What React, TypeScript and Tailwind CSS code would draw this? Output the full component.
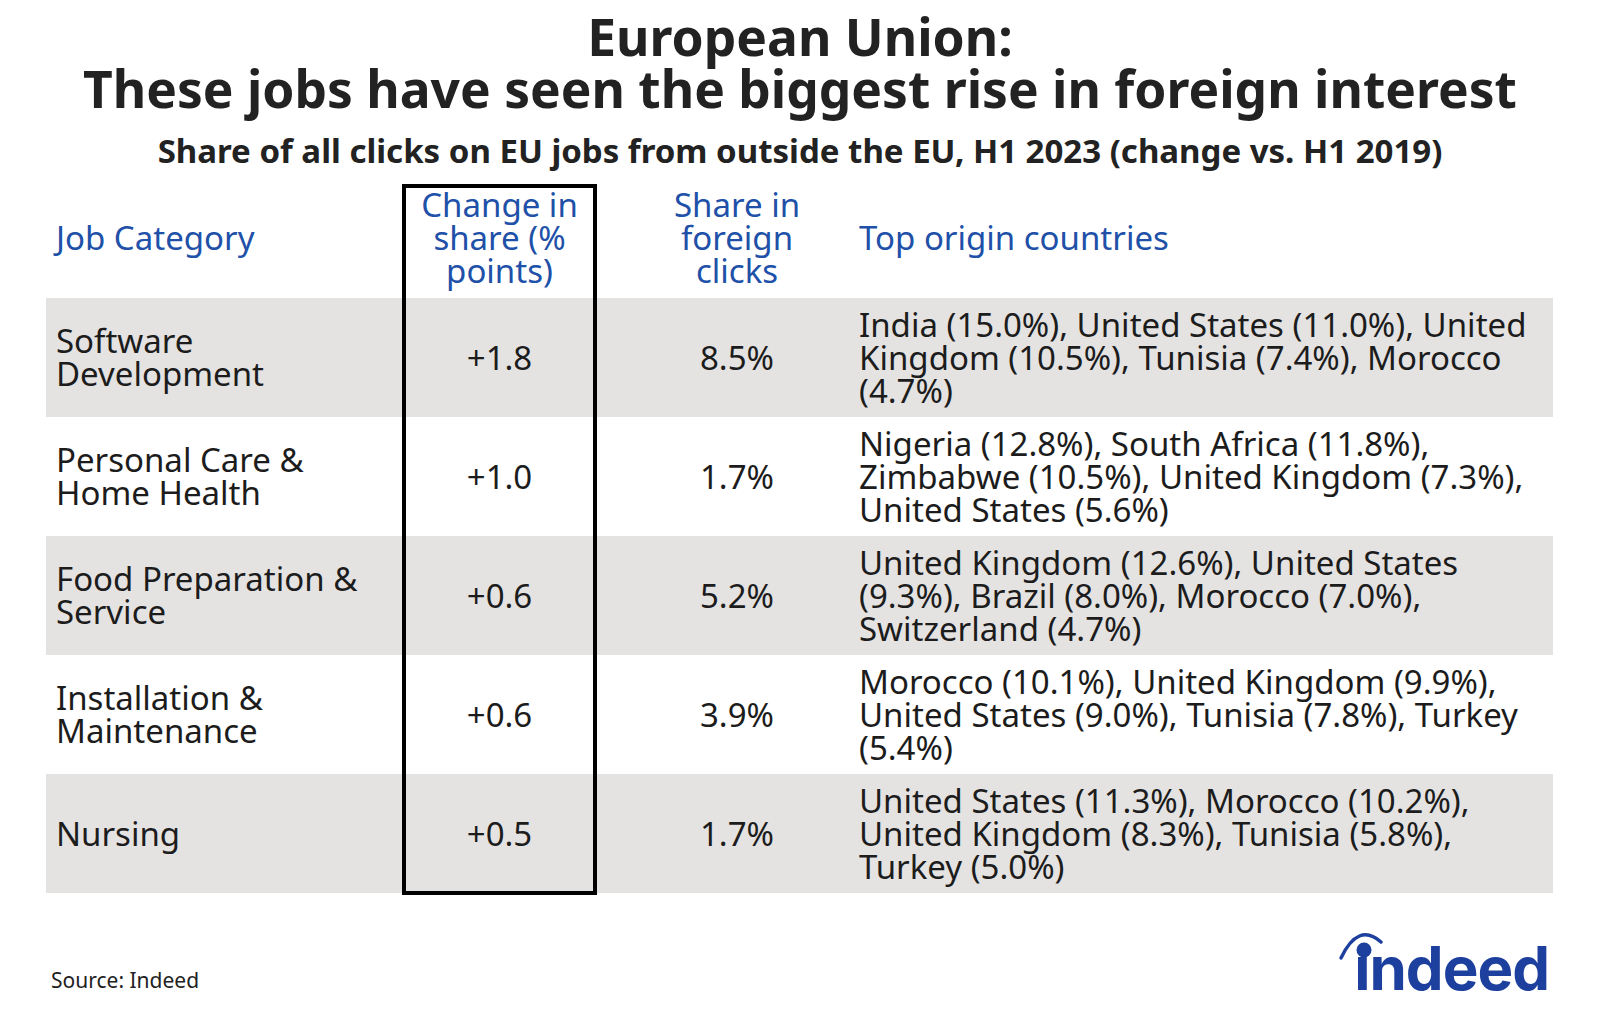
import React from "react";

const rows = [
  {
    job: ["Software", "Development"],
    change: "+1.8",
    share: "8.5%",
    origin: [
      "India (15.0%), United States (11.0%), United",
      "Kingdom (10.5%), Tunisia (7.4%), Morocco",
      "(4.7%)",
    ],
  },
  {
    job: ["Personal Care &", "Home Health"],
    change: "+1.0",
    share: "1.7%",
    origin: [
      "Nigeria (12.8%), South Africa (11.8%),",
      "Zimbabwe (10.5%), United Kingdom (7.3%),",
      "United States (5.6%)",
    ],
  },
  {
    job: ["Food Preparation &", "Service"],
    change: "+0.6",
    share: "5.2%",
    origin: [
      "United Kingdom (12.6%), United States",
      "(9.3%), Brazil (8.0%), Morocco (7.0%),",
      "Switzerland (4.7%)",
    ],
  },
  {
    job: ["Installation &", "Maintenance"],
    change: "+0.6",
    share: "3.9%",
    origin: [
      "Morocco (10.1%), United Kingdom (9.9%),",
      "United States (9.0%), Tunisia (7.8%), Turkey",
      "(5.4%)",
    ],
  },
  {
    job: ["Nursing"],
    change: "+0.5",
    share: "1.7%",
    origin: [
      "United States (11.3%), Morocco (10.2%),",
      "United Kingdom (8.3%), Tunisia (5.8%),",
      "Turkey (5.0%)",
    ],
  },
];

const Lines = ({ lines }: { lines: string[] }) => (
  <div>
    {lines.map((l, i) => (
      <div key={i} className="whitespace-nowrap">
        {l}
      </div>
    ))}
  </div>
);

// indeed wordmark: text with the swoosh + dot drawn on top
const IndeedLogo = () => (
  <div className="relative text-[#1d3f9e] font-['Inter',sans-serif] font-bold text-[60px] leading-none tracking-[-1px]">
    <span>ındeed</span>
    <svg
      className="absolute left-[-20px] top-[-20px] overflow-visible"
      width="60"
      height="50"
      viewBox="0 0 60 50"
      fill="none"
    >
      <path
        d="M7 40 Q24 4 47 24"
        stroke="#1d3f9e"
        strokeWidth="3.5"
        strokeLinecap="round"
      />
      <circle cx="30" cy="32" r="7.5" fill="#1d3f9e" />
    </svg>
  </div>
);

export default function App() {
  return (
    <div className="w-[1600px] h-[1022px] bg-white font-['Noto_Sans',sans-serif] text-[#1c1c1c] overflow-hidden">
      <div className="pt-[10px] text-center text-[51.5px] leading-[52px] font-bold text-[#222]">
        <div>European Union:</div>
        <div>These jobs have seen the biggest rise in foreign interest</div>
      </div>
      <div className="mt-[20px] text-center text-[33px] leading-[33px] font-bold text-[#222]">
        Share of all clicks on EU jobs from outside the EU, H1 2023 (change vs. H1 2019)
      </div>

      <div className="relative mt-[17px] ml-[46px] w-[1507px] text-[33px] leading-[33px]">
        <div className="grid grid-cols-[356px_195px_252px_704px] h-[114px] text-[#2050a8] pb-[8px]">
          <div className="flex items-center pl-[10px]">Job Category</div>
          <div className="flex items-center justify-center text-center">
            <Lines lines={["Change in", "share (%", "points)"]} />
          </div>
          <div className="flex items-center justify-center text-center pl-[28px]">
            <Lines lines={["Share in", "foreign", "clicks"]} />
          </div>
          <div className="flex items-center pl-[10px]">Top origin countries</div>
        </div>

        {rows.map((r, i) => (
          <div
            key={i}
            className={`grid grid-cols-[356px_195px_252px_704px] h-[119px] pb-[1px] ${
              i % 2 === 0 ? "bg-[#e4e3e2]" : "bg-white"
            }`}
          >
            <div className="flex items-center pl-[10px]">
              <Lines lines={r.job} />
            </div>
            <div className="flex items-center justify-center">{r.change}</div>
            <div className="flex items-center justify-center pl-[28px]">{r.share}</div>
            <div className="flex items-center pl-[10px]">
              <Lines lines={r.origin} />
            </div>
          </div>
        ))}

        <div className="absolute left-[356px] top-0 bottom-[-2px] w-[195px] border-[4px] border-black" />
      </div>

      <div className="flex justify-between items-start pl-[51px] pr-[51px]">
        <div className="mt-[77px] text-[21px] leading-[21px] text-[#222]">Source: Indeed</div>
        <div className="mt-[45px]">
          <IndeedLogo />
        </div>
      </div>
    </div>
  );
}
